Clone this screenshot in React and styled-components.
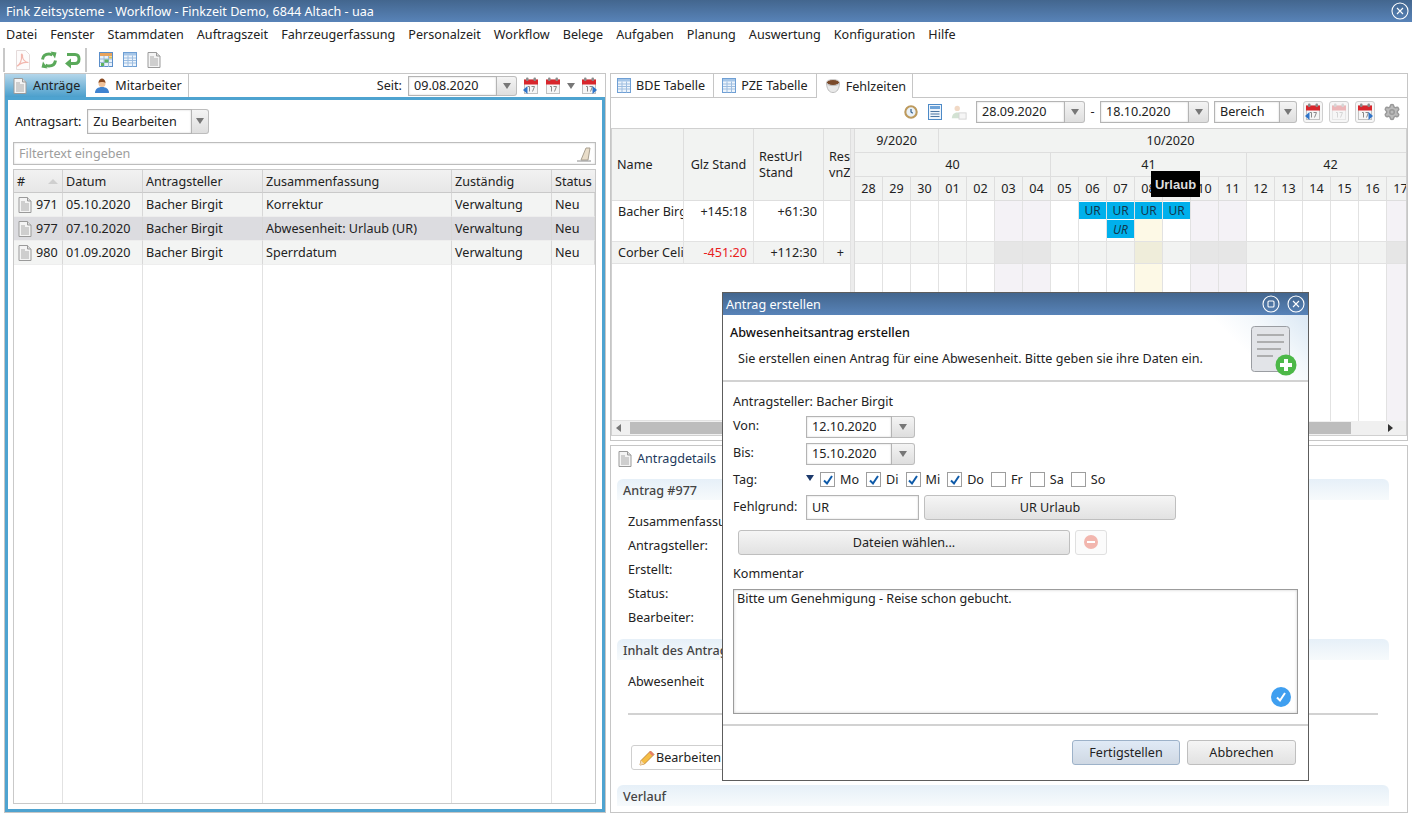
import React from "react"
import styled, { createGlobalStyle, css } from "styled-components"
import { Settings } from "lucide-react"

const GlobalStyle = createGlobalStyle`
	html, body {
		margin: 0;
		padding: 0;
		width: 1412px;
		height: 817px;
		overflow: hidden;
		background: #fff;
	}
	* {
		box-sizing: border-box;
	}
	body {
		font-family: "Noto Sans", "DejaVu Sans", sans-serif;
		font-size: 12.6px;
		color: #222;
	}
`

const MENU = ["Datei", "Fenster", "Stammdaten", "Auftragszeit", "Fahrzeugerfassung", "Personalzeit", "Workflow", "Belege", "Aufgaben", "Planung", "Auswertung", "Konfiguration", "Hilfe"]

const REQUESTS = [
	{ id: 971, date: "05.10.2020", name: "Bacher Birgit", text: "Korrektur" },
	{ id: 977, date: "07.10.2020", name: "Bacher Birgit", text: "Abwesenheit: Urlaub (UR)", selected: true },
	{ id: 980, date: "01.09.2020", name: "Bacher Birgit", text: "Sperrdatum" },
]

const DAYS = ["28", "29", "30", "01", "02", "03", "04", "05", "06", "07", "08", "09", "10", "11", "12", "13", "14", "15", "16", "17"]
const WEEKEND = [5, 6, 12, 13, 19]
const TODAY = 10
const BARS = { 8: ["UR"], 9: ["UR", "URi"], 10: ["UR"], 11: ["UR"] }

const DETAIL_FIELDS = ["Zusammenfassung:", "Antragsteller:", "Erstellt:", "Status:", "Bearbeiter:"]
const WEEKDAYS = [["Mo", true], ["Di", true], ["Mi", true], ["Do", true], ["Fr", false], ["Sa", false], ["So", false]]

/* icons */
const DocIcon = ({ size = 16 }) => (
	<svg width={size} height={size} viewBox="0 0 16 16">
		<path d="M2 .5h8.500l3.500 3.500v11.500h-12z" fill="#f4f4f4" stroke="#9a9a9a" />
		<path d="M10.500.5v3.500h3.500" fill="#ddd" stroke="#9a9a9a" />
		<path d="M4 5h4M4 7h8M4 9h8M4 11h8M4 13h8" stroke="#a8a8a8" />
	</svg>
)

const TableIcon = () => (
	<svg width="14" height="15" viewBox="0 0 14 15">
		<rect x=".5" y=".5" width="13" height="14" fill="#eef5fc" stroke="#6f9fd4" />
		<rect x="1" y="1" width="12" height="2.500" fill="#a5c6e8" />
		<path d="M1 6h12M1 8.500h12M1 11h12M5 3.500v11M9.500 3.500v11" stroke="#9dbde0" />
	</svg>
)

const ColorTableIcon = () => (
	<svg width="14" height="15" viewBox="0 0 14 15">
		<rect x=".5" y=".5" width="13" height="14" fill="#e8f1fb" stroke="#5b8ec9" />
		<rect x="1" y="1" width="12" height="3" fill="#e8a35c" />
		<path d="M1 7h12M1 10.500h12M5 4v11M9.500 4v11" stroke="#9ab8d8" />
		<rect x="5.500" y="7.500" width="4" height="3" fill="#5fb35f" />
		<rect x="2" y="11" width="3" height="3" fill="#5fb35f" />
		<rect x="10" y="4.500" width="3" height="2" fill="#e0c050" />
	</svg>
)

const PdfIcon = () => (
	<svg width="18" height="20" viewBox="0 0 18 20">
		<path d="M2.500.5h9l4 4v15h-13z" fill="#fdfbfb" stroke="#e4dada" />
		<path d="M3 16c3-1 5-6 4.500-10.500C7 3 9 4 8.500 7c.5 3 3 5 6 5.500-3-.5-8 .5-11 3.500z" fill="none" stroke="#f2b7ae" strokeWidth="1.200" />
	</svg>
)

const RefreshIcon = () => (
	<svg width="18" height="18" viewBox="0 0 18 18" fill="none" stroke="#5aa95a" strokeWidth="3">
		<path d="M2.500 8.500c.5-3.500 3-5.500 6.500-5.500 1.500 0 2.500.4 3.500 1.200" />
		<path d="M15.500 9.500c-.5 3.500-3 5.500-6.500 5.500-1.500 0-2.500-.4-3.500-1.200" />
		<path d="M10.500.5l6 1-1.500 6zM7.500 17.500l-6-1 1.500-6z" fill="#5aa95a" stroke="none" />
	</svg>
)

const UndoIcon = () => (
	<svg width="18" height="18" viewBox="0 0 18 18" fill="none" stroke="#5aa95a" strokeWidth="3">
		<path d="M3 3.500h8c2.500 0 4 1.800 4 4.500S13.500 12.500 11 12.500H6" />
		<path d="M7 7.500L1 12.500l6 5z" fill="#5aa95a" stroke="none" />
	</svg>
)

const PersonIcon = () => (
	<svg width="16" height="16" viewBox="0 0 16 16">
		<path d="M1 15c0-4 3-6 7-6s7 2 7 6z" fill="#3f83d0" />
		<circle cx="8" cy="5.500" r="3.500" fill="#f0c29a" />
		<path d="M4.500 5c0-3 2-4.500 3.500-4.500S11.500 2 11.500 5C10 3.800 6 3.800 4.500 5z" fill="#8a4a22" />
	</svg>
)

const CupIcon = () => (
	<svg width="16" height="16" viewBox="0 0 16 16">
		<ellipse cx="8" cy="4.500" rx="6.500" ry="3" fill="#7a4a2a" stroke="#cfcfcf" />
		<path d="M1.500 5c.3 6 2.500 9.500 6.500 9.500S14.200 11 14.500 5c-1 2-3.500 2.600-6.500 2.600S2.500 7 1.500 5z" fill="#e9e9e9" stroke="#bdbdbd" />
	</svg>
)

const CalIcon = ({ arrow, faded }) => (
	<CalWrap $faded={faded}>
		<svg width="16" height="18" viewBox="0 0 16 18">
			<rect x="1.500" y="3" width="13" height="13.500" fill="#f6f6f6" stroke="#c2c2c2" />
			<rect x="1" y="2.500" width="14" height="5" fill="#d8262c" />
			<rect x="3" y=".5" width="2.500" height="3.500" rx="1" fill="#8b8b8b" />
			<rect x="10.500" y=".5" width="2.500" height="3.500" rx="1" fill="#8b8b8b" />
			<path d="M5 9.500h1.500v5M8.500 9.500h3l-2 5" fill="none" stroke="#8a8a8a" />
			{arrow === "left" && <path d="M0 13l4.500-4v8z" fill="#2f74c9" />}
			{arrow === "right" && <path d="M16 13l-4.500-4v8z" fill="#2f74c9" />}
		</svg>
	</CalWrap>
)

const ClockIcon = () => (
	<svg width="14" height="14" viewBox="0 0 16 16">
		<circle cx="8" cy="8" r="6.500" fill="#e9f1f8" stroke="#bd9a5d" strokeWidth="2.400" />
		<path d="M8 4.500V8l2 1.500" fill="none" stroke="#35618f" strokeWidth="1.400" />
	</svg>
)

const ListIcon = () => (
	<svg width="14" height="16" viewBox="0 0 14 16">
		<rect x=".5" y=".5" width="13" height="15" fill="#eef4fb" stroke="#4d8ac7" />
		<rect x="2" y="2" width="10" height="3" fill="#6ea3d8" />
		<path d="M2.500 7.500h9M2.500 10h9M2.500 12.500h9" stroke="#4d76a3" />
	</svg>
)

const PeopleIcon = () => (
	<svg width="16" height="18" viewBox="0 0 18 18" opacity=".5">
		<circle cx="7" cy="5" r="3" fill="#e5b48c" />
		<path d="M1 16c0-4 2.500-6.500 6-6.500s6 2.500 6 6.500z" fill="#a8c7a8" />
		<rect x="9" y="10" width="8" height="7" fill="#eee" stroke="#aaa" />
	</svg>
)

const PencilIcon = () => (
	<svg width="16" height="16" viewBox="0 0 16 16">
		<path d="M1 15l1-4.500L11.500 1l3.500 3.500L5.500 14z" fill="#f5bd45" stroke="#b5782a" strokeWidth=".8" />
		<path d="M1 15l1-4.500L5.500 14z" fill="#f4dcb8" />
		<path d="M11.500 1l3.500 3.500-1.500 1.500L10 2.500z" fill="#e77c6e" />
	</svg>
)

const EraserIcon = () => (
	<svg width="16" height="16" viewBox="0 0 16 16">
		<path d="M5 14l5-12h4l-2 12z" fill="#e9ddc9" stroke="#a89f90" />
		<path d="M1 15h14" stroke="#8a8a8a" />
	</svg>
)

const RequestIcon = () => (
	<svg width="46" height="50" viewBox="0 0 46 50">
		<rect x=".5" y=".5" width="38" height="45" rx="3" fill="#e2e4e8" stroke="#9a9da2" />
		<path d="M6 9h27M6 16h27M6 23h24M6 30h16" stroke="#9c9c9c" strokeWidth="1.600" />
		<circle cx="35" cy="39" r="10.500" fill="#4cb848" />
		<path d="M35 33v12M29 39h12" stroke="#fff" strokeWidth="4" />
	</svg>
)

const RoundBtnIcon = ({ kind }) => (
	<svg width="18" height="18" viewBox="0 0 18 18" fill="none" stroke="#fff" strokeWidth="1.100">
		<circle cx="9" cy="9" r="8" />
		{kind === "close" ? <path d="M6 6l6 6M12 6l-6 6" /> : <rect x="6" y="6" width="6" height="6" rx="1" />}
	</svg>
)

const Caret = styled.span`
	display: block;
	width: 0;
	height: 0;
	border-left: 4px solid transparent;
	border-right: 4px solid transparent;
	border-top: 6px solid ${(p) => p.$color || "#777"};
`

const CalWrap = styled.span`
	display: inline-flex;
	opacity: ${(p) => (p.$faded ? 0.3 : 1)};
`

/* window chrome */
const Page = styled.div`
	width: 1412px;
	height: 817px;
	display: flex;
	flex-direction: column;
	position: relative;
	overflow: hidden;
`

const barGradient = css`
	background: linear-gradient(#43668e, #5883b8);
	color: #fff;
`

const TitleBar = styled.div`
	${barGradient}
	height: 22px;
	flex: none;
	padding: 0 3px 0 6px;
	display: flex;
	align-items: center;
	justify-content: space-between;
`

const MenuBar = styled.div`
	height: 24px;
	flex: none;
	display: flex;
	align-items: center;
	gap: 13px;
	padding: 0 6px;
`

const Toolbar = styled.div`
	height: 27px;
	flex: none;
	display: flex;
	align-items: center;
	padding-left: 3px;
`

const ToolSep = styled.span`
	width: 2px;
	height: 24px;
	background: #c8c8c8;
	margin-right: ${(p) => p.$after}px;
`

const ToolItem = styled.span`
	display: inline-flex;
	margin-right: ${(p) => p.$after}px;
`

const Main = styled.div`
	flex: 1;
	min-height: 0;
	display: flex;
	gap: 4px;
	padding: 0 4px 4px;
`

const LeftPane = styled.div`
	width: 602px;
	flex: none;
	border: 1px solid #c6c6c6;
	display: flex;
	flex-direction: column;
`

const RightColumn = styled.div`
	flex: 1;
	min-width: 0;
	display: flex;
	flex-direction: column;
	gap: 4px;
`

const TopPane = styled.div`
	height: 368px;
	flex: none;
	border: 1px solid #c6c6c6;
	display: flex;
	flex-direction: column;
`

const BottomPane = styled.div`
	flex: 1;
	min-height: 0;
	border: 1px solid #c6c6c6;
	padding: 0 18px 0 6px;
`

/* tabs */
const TabBar = styled.div`
	height: 24px;
	flex: none;
	display: flex;
	align-items: stretch;
	border-bottom: 1px solid #c6c6c6;
`

const Tab = styled.div`
	display: flex;
	align-items: center;
	gap: ${(p) => p.$gap || 5}px;
	padding: 0 ${(p) => p.$right || 7}px 0 ${(p) => p.$pad || 7}px;
	border-right: 1px solid #c6c6c6;
	white-space: nowrap;
	${(p) => p.$blue && css`background: linear-gradient(#b4d6ea, #4b9fcc); border-right: 0;`}
	${(p) => p.$open && css`background: #fff; margin-bottom: -1px;`}
`

const SeitGroup = styled.div`
	margin-left: auto;
	display: flex;
	align-items: center;
	padding-right: 8px;
	gap: 6px;
`

/* form parts */
const DateField = styled.div`
	display: flex;
	height: ${(p) => p.$h || 22}px;
`

const DateValue = styled.div`
	width: ${(p) => p.$w}px;
	border: 1px solid #b4b4b4;
	box-shadow: inset 0 0 2px #ccc;
	background: #fff;
	display: flex;
	align-items: center;
	padding-left: 5px;
`

const DropBtn = styled.div`
	width: ${(p) => p.$w || 20}px;
	border: 1px solid #bdbdbd;
	border-left: 0;
	border-radius: 0 3px 3px 0;
	background: linear-gradient(#f4f4f4, #dedede);
	display: flex;
	align-items: center;
	justify-content: center;
`

/* left panel */
const BlueFrame = styled.div`
	flex: 1;
	min-height: 0;
	border: 3px solid #4ea3d0;
	padding: 8px 5px 5px 5px;
	margin-top: -1px;
	display: flex;
	flex-direction: column;
`

const TypeRow = styled.div`
	height: 26px;
	flex: none;
	display: flex;
	align-items: center;
	gap: 6px;
	padding-left: 2px;
`

const FilterBox = styled.div`
	height: 23px;
	flex: none;
	margin: 8px 1px 4px 0;
	border: 1px solid #bdbdbd;
	box-shadow: inset 0 0 2px #ccc;
	display: flex;
	align-items: center;
	justify-content: space-between;
	padding: 0 3px 0 5px;
	color: #9d9d9d;
`

const RequestTable = styled.div`
	flex: 1;
	min-height: 0;
	margin-right: 1px;
	display: grid;
	grid-template-columns: 49px 80px 120px 189px 100px 1fr;
	grid-template-rows: 23px 24px 24px 24px 1fr;
	border: 1px solid #c9c9c9;
`

const HeadCell = styled.div`
	background: linear-gradient(#f2f2f2, #e7e7e7);
	border-right: 1px solid #d2d2d2;
	border-bottom: 1px solid #c9c9c9;
	padding-left: 3px;
	display: flex;
	align-items: center;
	justify-content: space-between;
	&:nth-child(6) {
		border-right: 0;
	}
`

const SortMark = styled.span`
	width: 0;
	height: 0;
	margin-right: 4px;
	border-left: 5px solid transparent;
	border-right: 5px solid transparent;
	border-bottom: 5px solid #cfcfcf;
`

const BodyCell = styled.div`
	background: ${(p) => (p.$selected ? "#dcdce0" : "#f3f4f3")};
	border-right: 1px solid #d8d8d8;
	border-bottom: 1px solid #eee;
	padding: 0 0 0 3px;
	display: flex;
	align-items: center;
	gap: 3px;
	white-space: nowrap;
	overflow: hidden;
	&:last-child {
		border-right: 0;
	}
`

const FillerCell = styled.div`
	border-right: 1px solid #e2e2e2;
	&:last-child {
		border-right: 0;
	}
`

/* gantt */
const GanttTools = styled.div`
	height: 30px;
	flex: none;
	display: flex;
	align-items: center;
	justify-content: flex-end;
	padding: 0 6px 3px 0;
	gap: 5px;
`

const DashLabel = styled.span`
	width: 5px;
	text-align: center;
`

const CalButton = styled.span`
	width: 20px;
	height: 22px;
	margin-left: 1px;
	border: 1px solid #cfcfcf;
	border-radius: 3px;
	background: #f6f6f6;
	display: inline-flex;
	align-items: center;
	justify-content: center;
`

const GearSlot = styled.span`
	display: inline-flex;
	margin-left: 3px;
`

const Gantt = styled.div`
	flex: 1;
	min-height: 0;
	margin: 0 0 4px 0;
	border: 1px solid #d0d0d0;
	display: flex;
	flex-direction: column;
	overflow: hidden;
`

const GanttGrid = styled.div`
	flex: 1;
	min-height: 0;
	display: grid;
	grid-template-columns: 72px 70px 70px 27px 4px repeat(20, 28px);
	grid-template-rows: 24px 24px 24px 41px 22px 1fr;
`

const GanttHead = styled.div`
	background: #f2f3f2;
	border-right: 1px solid #dedede;
	border-bottom: 1px solid #dedede;
	display: flex;
	align-items: center;
	justify-content: ${(p) => p.$align || "center"};
	text-align: ${(p) => (p.$align === "flex-start" ? "left" : "center")};
	line-height: 16px;
	padding: 0 ${(p) => p.$padRight ?? p.$pad ?? 0}px 0 ${(p) => p.$pad || 0}px;
	overflow: hidden;
	white-space: nowrap;
	grid-column: ${(p) => p.$col || "auto"};
	grid-row: ${(p) => p.$row || "auto"};
`

const Splitter = styled.div`
	background: #ececec;
	border-right: 1px solid #dcdcdc;
	grid-column: 5;
	grid-row: ${(p) => p.$row};
`

const DataCell = styled.div`
	border-right: 1px solid #e2e2e2;
	border-bottom: 1px solid #e2e2e2;
	display: flex;
	align-items: flex-start;
	padding: 2px 6px 0;
	justify-content: ${(p) => p.$align || "flex-start"};
	white-space: nowrap;
	overflow: hidden;
	color: ${(p) => p.$color || "#222"};
	background: ${(p) => (p.$shade ? "#f2f3f2" : "#fff")};
	grid-column: ${(p) => p.$col};
	grid-row: ${(p) => p.$row};
`

const dayColor = (p) => {
	if (p.$shade) return p.$today ? "#efedda" : p.$weekend ? "#e6e6e6" : "#f2f3f2"
	if (p.$today) return "#fdf9e6"
	return p.$weekend ? "#f4f2f6" : "#fff"
}

const DayCell = styled.div`
	background: ${dayColor};
	border-right: 1px solid #e2e2e2;
	border-bottom: ${(p) => (p.$last ? 0 : "1px solid #e2e2e2")};
	display: flex;
	flex-direction: column;
	gap: 1px;
	padding: 1px 0 0;
	min-width: 0;
`

const Bar = styled.div`
	height: ${(p) => (p.$italic ? 18 : 17)}px;
	flex: none;
	background: #00b0ec;
	color: #12384d;
	font-size: 12px;
	font-style: ${(p) => (p.$italic ? "italic" : "normal")};
	display: flex;
	align-items: center;
	justify-content: center;
`

const Scrollbar = styled.div`
	height: 14px;
	flex: none;
	background: #f0f0f0;
	display: flex;
	align-items: center;
	padding: 0 4px;
	gap: 7px;
`

const ScrollThumb = styled.div`
	width: 721px;
	height: 12px;
	background: #bdbdbd;
`

const ScrollArrow = styled.span`
	width: 0;
	height: 0;
	border-top: 4px solid transparent;
	border-bottom: 4px solid transparent;
	${(p) => (p.$right ? "border-left: 5px solid #333; margin-left: 30px;" : "border-right: 5px solid #777; margin-right: 2px;")}
`

const Tip = styled.div`
	position: absolute;
	left: 1151px;
	top: 171px;
	width: 49px;
	height: 26px;
	background: #000;
	color: #ddd;
	font-family: "Liberation Sans", sans-serif;
	font-size: 13px;
	font-weight: 700;
	display: flex;
	align-items: center;
	justify-content: center;
`

/* details */
const DetailTab = styled.div`
	height: 25px;
	display: flex;
	align-items: center;
	gap: 4px;
	color: #1d3a5c;
`

const SectionHead = styled.div`
	height: 21px;
	margin-top: ${(p) => p.$top || 0}px;
	background: linear-gradient(#e6f0f8, #f7fafc);
	border-radius: 6px 6px 0 0;
	padding: 1px 0 0 6px;
	display: flex;
	align-items: center;
	font-weight: 500;
	color: #444;
	white-space: nowrap;
`

const DetailRows = styled.div`
	padding: 9px 0 0 11px;
	display: flex;
	flex-direction: column;
`

const DetailRow = styled.div`
	height: 24px;
	display: flex;
	align-items: center;
`

const DetailRule = styled.div`
	height: 2px;
	background: #d2d2d2;
	margin: 20px 11px 0 11px;
`

const EditButton = styled.div`
	width: 110px;
	height: 25px;
	margin: 30px 0 15px 14px;
	border: 1px solid #cfcfcf;
	border-radius: 3px;
	display: flex;
	align-items: center;
	padding-left: 7px;
	gap: 1px;
`

/* dialog */
const Dialog = styled.div`
	position: absolute;
	left: 722px;
	top: 292px;
	width: 587px;
	height: 489px;
	background: #fff;
	border: 1px solid #5d5d5d;
	display: flex;
	flex-direction: column;
`

const DialogTitle = styled.div`
	${barGradient}
	height: 22px;
	flex: none;
	display: flex;
	align-items: center;
	padding: 0 3px 0 3px;
	gap: 7px;
`

const DialogName = styled.span`
	margin-right: auto;
`

const DialogHead = styled.div`
	height: 67px;
	flex: none;
	position: relative;
	padding: 8px 7px 0;
	border-bottom: 2px solid #d2d2d2;
	background: linear-gradient(225deg, #dbe8f4 0, #f2f7fb 38px, #fff 70px);
	background-size: 120px 100%;
	background-repeat: no-repeat;
	background-position: right top;
`

const DialogHeading = styled.div`
	font-weight: 500;
	font-size: 12.6px;
	line-height: 20px;
	color: #111;
`

const DialogText = styled.div`
	margin: 7px 0 0 8px;
	line-height: 18px;
`

const RequestBadge = styled.span`
	position: absolute;
	right: 11px;
	top: 11px;
	display: flex;
`

const DialogBody = styled.div`
	flex: 1;
	min-height: 0;
	padding: 7px 10px 0;
	display: flex;
	flex-direction: column;
`

const FormRow = styled.div`
	height: ${(p) => p.$h || 27}px;
	flex: none;
	display: flex;
	align-items: center;
	padding-left: ${(p) => p.$pad || 0}px;
	padding-bottom: ${(p) => p.$bottom || 0}px;
	gap: ${(p) => p.$gap || 0}px;
`

const FormLabel = styled.span`
	width: 73px;
	flex: none;
	padding-bottom: ${(p) => (p.$flat ? 0 : 3)}px;
`

const TagCaret = styled(Caret)`
	margin: -4px 6px 0 0;
`

const ChecksWrap = styled.div`
	display: flex;
	align-items: center;
	gap: 7px;
`

const CheckItem = styled.label`
	display: flex;
	align-items: center;
	gap: 5px;
`

const Check = styled.span`
	width: 15px;
	height: 15px;
	border: 1px solid #9e9e9e;
	display: flex;
	align-items: center;
	justify-content: center;
`

const TextBox = styled.div`
	width: 113px;
	height: 25px;
	border: 1px solid #b4b4b4;
	box-shadow: inset 0 0 2px #ccc;
	padding-left: 5px;
	display: flex;
	align-items: center;
`

const GrayButton = styled.div`
	height: 25px;
	width: ${(p) => p.$w}px;
	flex: none;
	border: 1px solid #bfbfbf;
	border-radius: 3px;
	background: ${(p) => (p.$primary ? "linear-gradient(#e0eaf6, #cfd8e3)" : "linear-gradient(#f5f5f5, #e2e2e2)")};
	border-color: ${(p) => (p.$primary ? "#9db2c9" : "#bfbfbf")};
	display: flex;
	align-items: center;
	justify-content: center;
`

const MinusButton = styled(GrayButton)`
	background: #fbfbfb;
	border-color: #e0e0e0;
`

const MinusDot = styled.span`
	width: 14px;
	height: 14px;
	border-radius: 50%;
	background: #f2b6ae;
	display: flex;
	align-items: center;
	justify-content: center;
	&::after {
		content: "";
		width: 8px;
		height: 2px;
		background: #fff;
	}
`

const CommentBox = styled.div`
	height: 125px;
	flex: none;
	border: 1px solid #9c9c9c;
	box-shadow: inset 0 0 3px #ccc;
	padding: 0 3px;
	line-height: 18px;
	position: relative;
`

const CheckBadge = styled.span`
	position: absolute;
	right: 6px;
	bottom: 6px;
	width: 20px;
	height: 20px;
	border-radius: 50%;
	background: #3f9ff0;
	display: flex;
	align-items: center;
	justify-content: center;
`

const DialogFooter = styled.div`
	height: 56px;
	flex: none;
	border-top: 2px solid #d2d2d2;
	display: flex;
	align-items: flex-start;
	justify-content: flex-end;
	gap: 7px;
	padding: 14px 12px 0 0;
`

const Tick = ({ color, width = 2 }) => (
	<svg width="12" height="12" viewBox="0 0 12 12" fill="none" stroke={color} strokeWidth={width}>
		<path d="M2 6.500l3 3L10 2" />
	</svg>
)

function RequestsPanel() {
	return (
		<LeftPane>
			<TabBar>
				<Tab $blue $pad={7} $right={6}>
					<DocIcon />
					Anträge
				</Tab>
				<Tab $pad={8} $right={6}>
					<PersonIcon />
					Mitarbeiter
				</Tab>
				<SeitGroup>
					Seit:
					<DateField $h={20}>
						<DateValue $w={89}>09.08.2020</DateValue>
						<DropBtn><Caret /></DropBtn>
					</DateField>
					<CalIcon arrow="left" />
					<CalIcon />
					<Caret />
					<CalIcon arrow="right" />
				</SeitGroup>
			</TabBar>
			<BlueFrame>
				<TypeRow>
					Antragsart:
					<DateField $h={25}>
						<DateValue $w={105}>Zu Bearbeiten</DateValue>
						<DropBtn $w={17}><Caret /></DropBtn>
					</DateField>
				</TypeRow>
				<FilterBox>
					Filtertext eingeben
					<EraserIcon />
				</FilterBox>
				<RequestTable>
					<HeadCell># <SortMark /></HeadCell>
					<HeadCell>Datum</HeadCell>
					<HeadCell>Antragsteller</HeadCell>
					<HeadCell>Zusammenfassung</HeadCell>
					<HeadCell>Zuständig</HeadCell>
					<HeadCell>Status</HeadCell>
					{REQUESTS.map((r) => (
						<React.Fragment key={r.id}>
							<BodyCell $selected={r.selected}><DocIcon />{r.id}</BodyCell>
							<BodyCell $selected={r.selected}>{r.date}</BodyCell>
							<BodyCell $selected={r.selected}>{r.name}</BodyCell>
							<BodyCell $selected={r.selected}>{r.text}</BodyCell>
							<BodyCell $selected={r.selected}>Verwaltung</BodyCell>
							<BodyCell $selected={r.selected}>Neu</BodyCell>
						</React.Fragment>
					))}
					{[0, 1, 2, 3, 4, 5].map((i) => <FillerCell key={i} />)}
				</RequestTable>
			</BlueFrame>
		</LeftPane>
	)
}

function AbsenceChart() {
	const dayCol = (i) => i + 6
	return (
		<TopPane>
			<TabBar>
				<Tab $pad={6} $right={8} $gap={5}><TableIcon />BDE Tabelle</Tab>
				<Tab $pad={8} $right={8} $gap={5}><TableIcon />PZE Tabelle</Tab>
				<Tab $open $pad={8} $right={6} $gap={5}><CupIcon />Fehlzeiten</Tab>
			</TabBar>
			<GanttTools>
				<ToolItem $after={5}><ClockIcon /></ToolItem>
				<ToolItem $after={4}><ListIcon /></ToolItem>
				<ToolItem $after={4}><PeopleIcon /></ToolItem>
				<DateField>
					<DateValue $w={89}>28.09.2020</DateValue>
					<DropBtn><Caret /></DropBtn>
				</DateField>
				<DashLabel>-</DashLabel>
				<DateField>
					<DateValue $w={89}>18.10.2020</DateValue>
					<DropBtn><Caret /></DropBtn>
				</DateField>
				<DateField>
					<DateValue $w={66}>Bereich</DateValue>
					<DropBtn $w={17}><Caret /></DropBtn>
				</DateField>
				<CalButton><CalIcon arrow="left" /></CalButton>
				<CalButton><CalIcon faded /></CalButton>
				<CalButton><CalIcon arrow="right" /></CalButton>
				<GearSlot><Settings size={18} color="#999" fill="#bbb" /></GearSlot>
			</GanttTools>
			<Gantt>
				<GanttGrid>
					<GanttHead $col="1" $row="1 / 4" $align="flex-start" $pad={5}>Name</GanttHead>
					<GanttHead $col="2" $row="1 / 4">Glz Stand</GanttHead>
					<GanttHead $col="3" $row="1 / 4" $align="flex-start" $pad={5}>RestUrl<br />Stand</GanttHead>
					<GanttHead $col="4" $row="1 / 4" $align="flex-start" $pad={5}>Rest<br />vnZ</GanttHead>
					<Splitter $row="1 / 7" />
					<GanttHead $col="6 / span 3" $row="1">9/2020</GanttHead>
					<GanttHead $col="9 / span 17" $row="1" $padRight={12}>10/2020</GanttHead>
					<GanttHead $col="6 / span 7" $row="2">40</GanttHead>
					<GanttHead $col="13 / span 7" $row="2">41</GanttHead>
					<GanttHead $col="20 / span 6" $row="2">42</GanttHead>
					{DAYS.map((d, i) => (
						<GanttHead key={i} $col={dayCol(i)} $row="3">{d}</GanttHead>
					))}

					<DataCell $col="1" $row="4">Bacher Birgit</DataCell>
					<DataCell $col="2" $row="4" $align="flex-end">+145:18</DataCell>
					<DataCell $col="3" $row="4" $align="flex-end">+61:30</DataCell>
					<DataCell $col="4" $row="4" />
					<DataCell $col="1" $row="5" $shade>Corber Celine</DataCell>
					<DataCell $col="2" $row="5" $shade $align="flex-end" $color="#e8201c">-451:20</DataCell>
					<DataCell $col="3" $row="5" $shade $align="flex-end">+112:30</DataCell>
					<DataCell $col="4" $row="5" $shade $align="flex-end">+</DataCell>
					<DataCell $col="1 / span 4" $row="6" />

					{DAYS.map((d, i) => {
						const flags = { $weekend: WEEKEND.includes(i), $today: i === TODAY }
						return (
							<React.Fragment key={i}>
								<DayCell style={{ gridColumn: dayCol(i), gridRow: 4 }} {...flags}>
									{(BARS[i] || []).map((b, n) => (
										<Bar key={n} $italic={b === "URi"}>UR</Bar>
									))}
								</DayCell>
								<DayCell style={{ gridColumn: dayCol(i), gridRow: 5 }} $shade {...flags} />
								<DayCell style={{ gridColumn: dayCol(i), gridRow: 6 }} $last {...flags} />
							</React.Fragment>
						)
					})}
				</GanttGrid>
				<Scrollbar>
					<ScrollArrow />
					<ScrollThumb />
					<ScrollArrow $right />
				</Scrollbar>
			</Gantt>
		</TopPane>
	)
}

function RequestDetails() {
	return (
		<BottomPane>
			<DetailTab>
				<DocIcon />
				Antragdetails
			</DetailTab>
			<SectionHead $top={8}>Antrag #977</SectionHead>
			<DetailRows>
				{DETAIL_FIELDS.map((f) => <DetailRow key={f}>{f}</DetailRow>)}
			</DetailRows>
			<SectionHead $top={10}>Inhalt des Antrags</SectionHead>
			<DetailRows>
				<DetailRow>Abwesenheit</DetailRow>
			</DetailRows>
			<DetailRule />
			<EditButton>
				<PencilIcon />
				Bearbeiten
			</EditButton>
			<SectionHead>Verlauf</SectionHead>
		</BottomPane>
	)
}

function CreateDialog() {
	return (
		<Dialog>
			<DialogTitle>
				<DialogName>Antrag erstellen</DialogName>
				<RoundBtnIcon kind="max" />
				<RoundBtnIcon kind="close" />
			</DialogTitle>
			<DialogHead>
				<DialogHeading>Abwesenheitsantrag erstellen</DialogHeading>
				<DialogText>Sie erstellen einen Antrag für eine Abwesenheit. Bitte geben sie ihre Daten ein.</DialogText>
				<RequestBadge><RequestIcon /></RequestBadge>
			</DialogHead>
			<DialogBody>
				<FormRow $h={24}>Antragsteller: Bacher Birgit</FormRow>
				<FormRow>
					<FormLabel>Von:</FormLabel>
					<DateField>
						<DateValue $w={86}>12.10.2020</DateValue>
						<DropBtn $w={23}><Caret /></DropBtn>
					</DateField>
				</FormRow>
				<FormRow>
					<FormLabel>Bis:</FormLabel>
					<DateField>
						<DateValue $w={86}>15.10.2020</DateValue>
						<DropBtn $w={23}><Caret /></DropBtn>
					</DateField>
				</FormRow>
				<FormRow $h={25}>
					<FormLabel $flat>Tag:</FormLabel>
					<TagCaret $color="#1d3a6c" />
					<ChecksWrap>
						{WEEKDAYS.map(([d, on]) => (
							<CheckItem key={d}>
								<Check>{on && <Tick color="#0e5aa8" />}</Check>
								{d}
							</CheckItem>
						))}
					</ChecksWrap>
				</FormRow>
				<FormRow $h={31} $gap={5}>
					<FormLabel style={{ marginRight: -5 }}>Fehlgrund:</FormLabel>
					<TextBox>UR</TextBox>
					<GrayButton $w={252}>UR Urlaub</GrayButton>
				</FormRow>
				<FormRow $h={38} $pad={5} $gap={5}>
					<GrayButton $w={332}>Dateien wählen...</GrayButton>
					<MinusButton $w={32}><MinusDot /></MinusButton>
				</FormRow>
				<FormRow $h={28} $bottom={4}>Kommentar</FormRow>
				<CommentBox>
					Bitte um Genehmigung - Reise schon gebucht.
					<CheckBadge><Tick color="#fff" /></CheckBadge>
				</CommentBox>
			</DialogBody>
			<DialogFooter>
				<GrayButton $w={108} $primary>Fertigstellen</GrayButton>
				<GrayButton $w={109}>Abbrechen</GrayButton>
			</DialogFooter>
		</Dialog>
	)
}

export default function App() {
	return (
		<Page>
			<GlobalStyle />
			<TitleBar>
				Fink Zeitsysteme - Workflow - Finkzeit Demo, 6844 Altach - uaa
				<RoundBtnIcon kind="close" />
			</TitleBar>
			<MenuBar>
				{MENU.map((m) => <span key={m}>{m}</span>)}
			</MenuBar>
			<Toolbar>
				<ToolSep $after={9} />
				<ToolItem $after={8}><PdfIcon /></ToolItem>
				<ToolItem $after={6}><RefreshIcon /></ToolItem>
				<ToolItem $after={3}><UndoIcon /></ToolItem>
				<ToolSep $after={12} />
				<ToolItem $after={10}><ColorTableIcon /></ToolItem>
				<ToolItem $after={9}><TableIcon /></ToolItem>
				<ToolItem $after={0}><DocIcon /></ToolItem>
			</Toolbar>
			<Main>
				<RequestsPanel />
				<RightColumn>
					<AbsenceChart />
					<RequestDetails />
				</RightColumn>
			</Main>
			<Tip>Urlaub</Tip>
			<CreateDialog />
		</Page>
	)
}
